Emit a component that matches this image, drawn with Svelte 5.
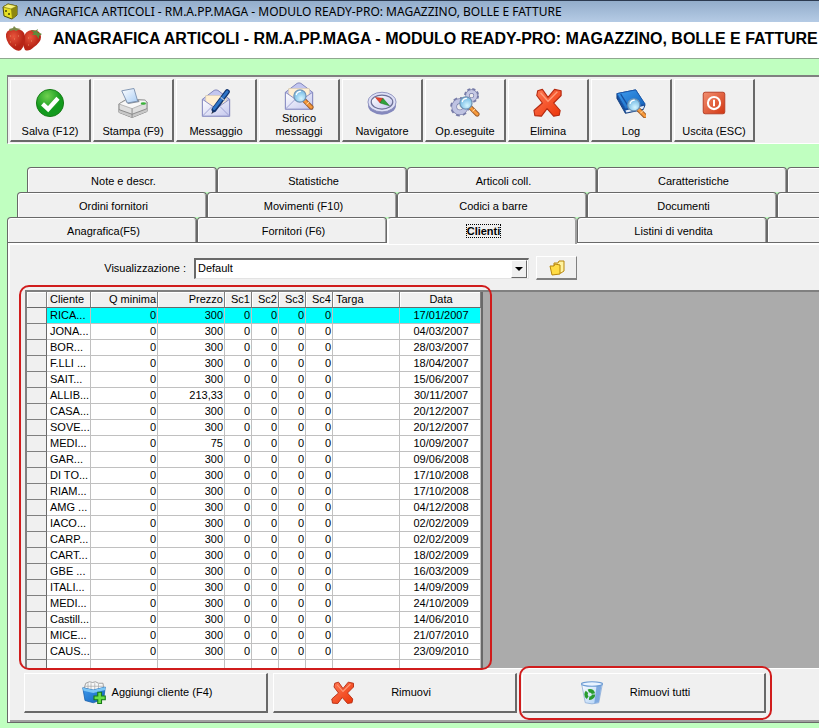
<script>
    const titolo = 'ANAGRAFICA ARTICOLI - RM.A.PP.MAGA - MODULO READY-PRO: MAGAZZINO, BOLLE E FATTURE';

    const comandi = [
        { nome: 'Salva (F12)', icona: salva },
        { nome: 'Stampa (F9)', icona: stampa },
        { nome: 'Messaggio', icona: messaggio },
        { nome: 'Storico messaggi', icona: storico },
        { nome: 'Navigatore', icona: bussola },
        { nome: 'Op.eseguite', icona: ingranaggi },
        { nome: 'Elimina', icona: croce },
        { nome: 'Log', icona: libro },
        { nome: 'Uscita (ESC)', icona: uscita }
    ];

    const schede = [
        ['Note e descr.', 'Statistiche', 'Articoli coll.', 'Caratteristiche'],
        ['Ordini fornitori', 'Movimenti (F10)', 'Codici a barre', 'Documenti'],
        ['Anagrafica(F5)', 'Fornitori (F6)', 'Clienti', 'Listini di vendita']
    ];

    let attiva = $state('Clienti');
    let riga = $state(0);

    const clienti = [
        ['RICA...', '300', '17/01/2007'],
        ['JONA...', '300', '04/03/2007'],
        ['BOR...', '300', '28/03/2007'],
        ['F.LLI ...', '300', '18/04/2007'],
        ['SAIT...', '300', '15/06/2007'],
        ['ALLIB...', '213,33', '30/11/2007'],
        ['CASA...', '300', '20/12/2007'],
        ['SOVE...', '300', '20/12/2007'],
        ['MEDI...', '75', '10/09/2007'],
        ['GAR...', '300', '09/06/2008'],
        ['DI TO...', '300', '17/10/2008'],
        ['RIAM...', '300', '17/10/2008'],
        ['AMG ...', '300', '04/12/2008'],
        ['IACO...', '300', '02/02/2009'],
        ['CARP...', '300', '02/02/2009'],
        ['CART...', '300', '18/02/2009'],
        ['GBE ...', '300', '16/03/2009'],
        ['ITALI...', '300', '14/09/2009'],
        ['MEDI...', '300', '24/10/2009'],
        ['Castill...', '300', '14/06/2010'],
        ['MICE...', '300', '21/07/2010'],
        ['CAUS...', '300', '23/09/2010']
    ];
</script>

{#snippet lente()}
    <path d="M22 21l7 7" stroke="#9a5a28" stroke-width="5" stroke-linecap="round" />
    <path d="M22 21l7 7" stroke="#f79a3c" stroke-width="3" stroke-linecap="round" />
    <path d="M24 25l3-3" stroke="#ffe0b0" stroke-width="1" />
    <circle cx="17" cy="16" r="6.5" fill="url(#vetro)" stroke="#6f93b5" stroke-width="1.3" />
    <path d="M13 15q1-4 5-4" stroke="#fff" stroke-width="1.3" fill="none" />
{/snippet}

{#snippet salva()}
    <circle cx="16" cy="16" r="14.5" fill="url(#verde)" stroke="#147a14" />
    <path d="M8 17l6 5.500L24.500 11" fill="none" stroke="#fff" stroke-width="4.600" />
{/snippet}

{#snippet stampa()}
    <path d="M1 17 9 12 29 13 31 15 31 25 15 31.500 1 26z" fill="#dedede" stroke="#777" />
    <path d="M1 17 9 12.500 29 13 31 15.500 15 22z" fill="#f8f8f8" stroke="#999" stroke-width=".7" />
    <path d="M8 14 22 12.500 23 15 11 17z" fill="#8a9099" />
    <path d="M4 3 17 .5 21 14 10 16z" fill="url(#carta)" stroke="#7d92b0" />
    <path d="M1 26 15 31.500 31 25v-3l-16 6-14-5z" fill="#c8c8c8" />
    <path d="M15 22v9M1 23l14 5 16-6" fill="none" stroke="#888" />
    <ellipse cx="27" cy="16.500" rx="2.800" ry="1.400" fill="#39b339" />
{/snippet}

{#snippet busta()}
    <path d="M1.500 12 14 2.500q2-1 4 0L30.500 12v18h-29z" fill="#c3c6ef" stroke="#7e82b8" />
    <path d="M5 8h22v14H5z" fill="#ffefd2" stroke="#d8c8a8" stroke-width=".6" />
    <path d="M1.500 12v18h29V12L16 22z" fill="url(#lilla)" stroke="#8589c0" />
    <path d="M1.500 30 12 19.500M30.500 30 20 19.500" stroke="#9b9ed0" fill="none" />
{/snippet}

{#snippet messaggio()}
    {@render busta()}
    <path d="M11 28l2-7 3 3z" fill="#303848" />
    <path d="M14 23 28 4" stroke="#12356e" stroke-width="5.500" stroke-linecap="round" />
    <path d="M14 22 28 4" stroke="#2f75c8" stroke-width="3" stroke-linecap="round" />
    <path d="M21 10l5 4" stroke="#b8c4d8" stroke-width="1.200" />
{/snippet}

{#snippet storico()}
    {@render busta()}
    {@render lente()}
{/snippet}

{#snippet bussola()}
    <ellipse cx="16" cy="18" rx="15" ry="10.500" fill="#8488bd" />
    <ellipse cx="16" cy="15" rx="15" ry="10.500" fill="#dfe1f7" stroke="#8d90bd" />
    <ellipse cx="16" cy="15" rx="11.500" ry="7.500" fill="url(#lilla)" stroke="#6d7096" stroke-width="1.300" />
    <path d="M9 10 17 11 14 16z" fill="#e8432c" stroke="#a82412" stroke-width=".5" />
    <path d="M24 19 17 11 14 16z" fill="#2fa33a" stroke="#14601c" stroke-width=".5" />
{/snippet}

{#snippet ingranaggi()}
    <circle cx="23" cy="8" r="5.500" fill="none" stroke="#777ca8" stroke-width="5" stroke-dasharray="2.600 1.720" />
    <circle cx="23" cy="8" r="4.300" fill="#eee" stroke="#777ca8" stroke-width="4.600" />
    <circle cx="23" cy="8" r="4.300" fill="none" stroke="#c6c9e4" stroke-width="3.200" />
    <circle cx="10.500" cy="20" r="7.800" fill="none" stroke="#777ca8" stroke-width="5" stroke-dasharray="3.400 2.725" />
    <circle cx="10.500" cy="20" r="6" fill="#eee" stroke="#777ca8" stroke-width="6" />
    <circle cx="10.500" cy="20" r="6" fill="none" stroke="#bfc3e2" stroke-width="4.600" />
    {@render lente()}
{/snippet}

{#snippet croce()}
    <path d="M5 3 10 1.500 16 10 23 1.500 30 3 30 8 22 16 29 24 28 29 22 30 15 22 9 30 2 29.500 1 24 10 16 4 8z"
        fill="url(#rosso)" stroke="#b52a10" stroke-width="1.200" stroke-linejoin="round" />
    <path d="M8 5l8 9L26 4" fill="none" stroke="#ff9b78" stroke-width="1.500" />
{/snippet}

{#snippet libro()}
    <path d="M1 6 21 2 31 18 29 23 10 27 1 11z" fill="#164f9e" stroke="#123c7c" />
    <path d="M10 24 30 19 29 22 11 26z" fill="#e7eef8" />
    <path d="M1 6 21 2 31 17 10 22z" fill="url(#blu)" stroke="#1b5bb0" />
    <path d="M5 6.500 14 21" stroke="#174f9e" stroke-width="1.300" />
    <g transform="translate(2 2)">{@render lente()}</g>
{/snippet}

{#snippet uscita()}
    <rect x="4.500" y="4.500" width="23" height="23" rx="2" fill="url(#mattone)" stroke="#b53c22" />
    <circle cx="16" cy="16" r="6.500" fill="none" stroke="#fff" stroke-width="2.200" />
    <path d="M16 12.500v7" stroke="#fff" stroke-width="2.200" />
{/snippet}

{#snippet aggiungi()}
    <path d="M3 9 5 3 10 1 14 2 18 1 22 3 28 3 29 10 16 14z" fill="#f7f7f7" stroke="#888" />
    <path d="M8 3v7M12 3v8M17 3v8M22 4v6M4 7l24 0" stroke="#aaa" />
    <path d="M1 9 15 12 31 8 29 24 15 29 4 26z" fill="url(#blu)" stroke="#145ba8" />
    <path d="M1 9 15 12 31 8v4l-16 4L2 13z" fill="#7cc6f5" />
    <path d="M21 15h5v5h5v5h-5v5h-5v-5h-5v-5h5z" fill="#6be046" stroke="#187a18" stroke-width="1.500" />
{/snippet}

{#snippet cestino()}
    <path d="M2 3 30 3 25 29q-9 3-18 0z" fill="url(#carta)" stroke="#8cabd4" />
    <path d="M22 7 29 4 25 28 19 30z" fill="#7fa9df" />
    <ellipse cx="16" cy="4" rx="14" ry="3" fill="#e9f3ff" stroke="#6c9bd3" stroke-width="1.500" />
    <circle cx="13" cy="18" r="5" fill="none" stroke="#2a9c2f" stroke-width="4.500" stroke-dasharray="8.500 2" />
{/snippet}

{#snippet icona(disegno, classe)}
    <svg class={classe} viewBox="0 0 32 32" fill="none" aria-hidden="true">{@render disegno()}</svg>
{/snippet}

<svg class="sfumature" aria-hidden="true">
    <defs>
        <radialGradient id="verde" cx=".4" cy=".25"><stop stop-color="#6fd04f" /><stop offset="1" stop-color="#139a1e" /></radialGradient>
        <radialGradient id="vetro" cx=".6" cy=".7"><stop stop-color="#d4f5ff" /><stop offset="1" stop-color="#87c6ea" /></radialGradient>
        <linearGradient id="carta" x2="1" y2="1"><stop stop-color="#fff" /><stop offset="1" stop-color="#a9cdf5" /></linearGradient>
        <linearGradient id="lilla" x2="1" y2="1"><stop stop-color="#fff" /><stop offset="1" stop-color="#c4c7ee" /></linearGradient>
        <linearGradient id="rosso" x2="1" y2="1"><stop stop-color="#ff7a55" /><stop offset="1" stop-color="#ec3408" /></linearGradient>
        <linearGradient id="mattone" x2="1" y2="1"><stop stop-color="#f28f70" /><stop offset="1" stop-color="#d23612" /></linearGradient>
        <linearGradient id="blu" x2="1" y2="1"><stop stop-color="#3f9df0" /><stop offset="1" stop-color="#1260b8" /></linearGradient>
        <radialGradient id="fragola" cx=".4" cy=".35"><stop stop-color="#e8553c" /><stop offset="1" stop-color="#b82416" /></radialGradient>
    </defs>
</svg>

<main>
    <div class="barra-titolo">
        <svg class="cubo" viewBox="0 0 16 18" aria-hidden="true">
            <path d="M1 4 6 1 15 3 15 12 10 16 2 13z" fill="#e6df22" stroke="#4c4a08" />
            <path d="M9 6 15 3v9l-5 4z" fill="#8d8710" />
            <path d="M1 4 9 6 15 3 6 1z" fill="#f7f27a" stroke="#6b680c" stroke-width=".6" />
            <path d="M3 7h2v2H3zM6 10h2v2H6z" fill="#6b680c" />
        </svg>
        <span>{titolo}</span>
    </div>

    <header>
        <svg class="fragole" viewBox="0 0 38 26" aria-hidden="true">
            <path d="M19 11q1-6 8-7 9 0 9 7 0 5-7 10-5 5-9 3-3-5-1-13z" fill="url(#fragola)" />
            <path d="M1 11Q0 4 8 3q11-1 12 7 1 8-4 14-3 2-7-1-7-5-8-12z" fill="url(#fragola)" />
            <path d="M4 3 8 2 9 0l2 2 5 1-3 1-2 1-2-1-4 1z" fill="#7c8a4a" />
            <path d="M26 4l4 1 3-2-1 3 5 2-3 2 0 3-3-4-4 0 2-2z" fill="#5f8a3a" />
            <path d="M5 10h1M9 13h1M5 16h1M13 10h1M10 19h1M23 12h1M26 15h1M23 19h1" stroke="#f0a070" stroke-width=".8" />
        </svg>
        <h1>{titolo}</h1>
    </header>

    <div class="comandi" role="toolbar" aria-label="Comandi">
        {#each comandi as c}
            <button class="comando">
                <span class="figura">{@render icona(c.icona, 'grande')}</span>
                <span class="nome">{c.nome}</span>
            </button>
        {/each}
    </div>

    <div class="schede" role="tablist">
        {#each schede as fila}
            <div class="fila">
                {#each fila as s}
                    <button class="scheda" class:attiva={attiva == s} role="tab" aria-selected={attiva == s} onclick={() => (attiva = s)}>
                        <span>{s}</span>
                    </button>
                {/each}
                <span class="scheda"></span>
            </div>
        {/each}
    </div>

    <section class="pannello">
        <div class="filtro">
            <label for="vista">Visualizzazione :</label>
            <div class="combo">
                <select id="vista">
                    <option>Default</option>
                </select>
                <span class="freccia"></span>
            </div>
            <button class="cartella" aria-label="Apri">
                <svg viewBox="0 0 16 16" aria-hidden="true">
                    <path d="M5 3 9 3 10 1 15 1 15 11 12 13 5 13z" fill="#fff3a0" stroke="#b8860b" />
                    <path d="M1 6 5 6 6 4 11 5 11 14 3 15z" fill="#ffdc45" stroke="#b8860b" />
                </svg>
            </button>
        </div>

        <div class="griglia">
            <div class="riquadro elenco">
                <table>
                    <colgroup>
                        <col class="c-sel" /><col class="c-cli" /><col class="c-num" /><col class="c-num" />
                        <col class="c-sc" /><col class="c-sc" /><col class="c-sc" /><col class="c-sc" />
                        <col class="c-num" /><col class="c-data" />
                    </colgroup>
                    <thead>
                        <tr>
                            <td></td>
                            <th class="sx">Cliente</th>
                            <th>Q minima</th>
                            <th>Prezzo</th>
                            <th>Sc1</th>
                            <th>Sc2</th>
                            <th>Sc3</th>
                            <th>Sc4</th>
                            <th class="sx">Targa</th>
                            <th class="centro">Data</th>
                        </tr>
                    </thead>
                    <tbody>
                        {#each clienti as [nome, prezzo, data], i}
                            <tr class:scelta={riga == i} onclick={() => (riga = i)}>
                                <td class="sel"></td>
                                <td class="sx">{nome}</td>
                                <td>0</td>
                                <td>{prezzo}</td>
                                <td>0</td>
                                <td>0</td>
                                <td>0</td>
                                <td>0</td>
                                <td></td>
                                <td class="centro">{data}</td>
                            </tr>
                        {/each}
                        <tr class="vuota">
                            <td class="sel"></td>
                            {#each Array(9) as _}<td></td>{/each}
                        </tr>
                    </tbody>
                </table>
            </div>
        </div>

        <div class="azioni">
            <button class="azione">{@render icona(aggiungi, 'media')}<span>Aggiungi cliente (F4)</span></button>
            <button class="azione">{@render icona(croce, 'media')}<span>Rimuovi</span></button>
            <div class="riquadro tutti">
                <button class="azione">{@render icona(cestino, 'media')}<span>Rimuovi tutti</span></button>
            </div>
        </div>
    </section>
</main>

<style>
    :global(body) {
        background: #c0ffc0;
        overflow-x: hidden;
    }

    main {
        font: 11px/13px "Liberation Sans", Arial, sans-serif;
        color: #000;
        overflow: hidden;
        padding-bottom: 4px;
    }

    button, select {
        font: inherit;
        color: inherit;
        padding: 0;
    }

    .sfumature {
        position: absolute;
        width: 0;
        height: 0;
    }

    .barra-titolo {
        display: flex;
        align-items: center;
        gap: 7px;
        height: 21px;
        padding-left: 2px;
        border-top: 1px solid #2c3a50;
        background: linear-gradient(#93adcb, #b5cbe5);
        font-family: "Noto Sans", sans-serif;
        font-size: 12px;
        white-space: nowrap;
    }

    .cubo {
        width: 16px;
        height: 18px;
    }

    header {
        display: flex;
        align-items: center;
        gap: 10px;
        height: 36px;
        padding-left: 5px;
        background: #fff;
        border-bottom: 1px solid #8fa88f;
    }

    .fragole {
        width: 38px;
        height: 26px;
        flex: none;
        margin-bottom: 2px;
    }

    h1 {
        margin: 0 0 3px;
        font-size: 16px;
        line-height: 20px;
        white-space: nowrap;
    }

    .comandi {
        display: flex;
        gap: 2px;
        margin: 16px 0 0 7px;
        padding: 2px 2px 1px;
        background: #f0f0f0;
        border: 1px solid #808080;
        border-top-width: 2px;
        border-right: 0;
        border-bottom-color: #fff;
    }

    .comando {
        display: flex;
        flex-direction: column;
        align-items: center;
        box-sizing: border-box;
        flex: none;
        width: 81px;
        height: 63px;
        padding-bottom: 2px;
        background: #f0f0f0;
        border: 1px solid #fff;
        border-right: 2px solid #696969;
        border-bottom: 2px solid #696969;
    }

    .figura {
        flex: 1;
        display: flex;
        align-items: center;
    }

    .nome {
        max-width: 64px;
        text-align: center;
    }

    .grande {
        width: 30px;
        height: 30px;
        display: block;
    }

    .schede {
        margin-top: 23px;
    }

    .fila {
        display: flex;
        padding-left: 27px;
    }

    .fila:nth-child(2) {
        padding-left: 17px;
    }

    .fila:nth-child(3) {
        padding-left: 7px;
    }

    .scheda {
        box-sizing: border-box;
        flex: none;
        width: 190px;
        height: 25px;
        padding: 2px 0 0 3px;
        background: #f0f0f0;
        border: 1px solid #696969;
        border-bottom: 0;
        border-radius: 4px 4px 0 0;
        box-shadow: inset 1px 1px #fff, inset -1px 0 #a0a0a0;
    }

    .attiva {
        position: relative;
        height: 27px;
        margin-bottom: -2px;
        padding-bottom: 2px;
        border-color: #696969 #a0a0a0 #696969 #fff;
        font-weight: bold;
    }

    .attiva span {
        outline: 1px dotted #000;
    }

    .pannello {
        margin-left: 7px;
        padding: 13px 0 5px 16px;
        background: #f0f0f0;
        border: 1px solid #696969;
        border-right: 0;
        box-shadow: inset 2px 2px #fff, inset 0 -2px #a0a0a0;
    }

    .filtro {
        display: flex;
        align-items: center;
        padding-bottom: 10px;
    }

    .filtro label {
        width: 162px;
        text-align: right;
        margin-right: 8px;
    }

    .combo {
        display: flex;
        position: relative;
        width: 335px;
        margin-right: 7px;
    }

    select {
        appearance: none;
        box-sizing: border-box;
        width: 100%;
        height: 21px;
        padding-left: 2px;
        background: #fff;
        border: 2px solid #696969;
        border-right: 1px solid #e3e3e3;
        border-bottom: 1px solid #e3e3e3;
        border-radius: 0;
    }

    .freccia {
        position: absolute;
        top: 2px;
        right: 2px;
        bottom: 1px;
        width: 14px;
        display: grid;
        place-items: center;
        background: #f0f0f0;
        border: 1px solid #fff;
        border-right-color: #696969;
        border-bottom-color: #696969;
        pointer-events: none;
    }

    .freccia::before {
        content: "";
        border: 4px solid transparent;
        border-top-color: #000;
        border-bottom: 0;
    }

    .cartella {
        display: grid;
        place-items: center;
        width: 41px;
        height: 24px;
        background: #f0f0f0;
        border: 1px solid #fff;
        border-right-color: #808080;
        border-bottom: 2px solid #808080;
    }

    .cartella svg {
        width: 16px;
        height: 16px;
        fill: none;
    }

    .griglia {
        margin-left: 1px;
        background: #ababab;
        border-top: 2px solid #808080;
        border-left: 2px solid #808080;
    }

    .riquadro {
        position: relative;
        width: max-content;
    }

    .riquadro::after {
        content: "";
        position: absolute;
        border: 2px solid #d01c1c;
        border-radius: 10px;
        pointer-events: none;
    }

    .elenco::after {
        inset: -7px -9px -2px -8px;
    }

    .tutti::after {
        inset: -7px -6px -7px -3px;
    }

    table {
        table-layout: fixed;
        width: 456px;
        border-collapse: separate;
        border-spacing: 0;
        border-right: 2px solid #696969;
        background: #fff;
    }

    .c-sel { width: 20px; }
    .c-cli { width: 44px; }
    .c-num { width: 67px; }
    .c-sc { width: 27px; }
    .c-data { width: 81px; }

    td, th {
        box-sizing: border-box;
        height: 16px;
        padding: 0 1px 0 0;
        font-weight: normal;
        line-height: 15px;
        text-align: right;
        white-space: nowrap;
        overflow: hidden;
        border-right: 1px solid #c0c0c0;
        border-bottom: 1px solid #c0c0c0;
    }

    thead td, thead th {
        height: 16px;
        background: #f0f0f0;
        border-right-color: #808080;
        border-bottom-color: #696969;
        box-shadow: inset 1px 1px #fff;
    }

    .sx {
        text-align: left;
        padding-left: 3px;
    }

    .centro {
        text-align: center;
        padding-left: 3px;
    }

    .sel {
        background: #f0f0f0;
        border-right-color: #696969;
        border-bottom-color: #808080;
    }

    .scelta td:not(.sel) {
        background: #0ff;
    }

    .vuota td {
        height: 8px;
        border-bottom: 0;
    }

    .azioni {
        display: flex;
        gap: 5px;
        padding: 4px 0;
        border-top: 1px solid #fff;
    }

    .azione {
        display: flex;
        align-items: center;
        box-sizing: border-box;
        width: 244px;
        height: 40px;
        padding-left: 57px;
        background: #f0f0f0;
        border: 1px solid #fff;
        border-right: 2px solid #696969;
        border-bottom: 2px solid #696969;
    }

    .azione span {
        width: 112px;
        text-align: center;
        white-space: nowrap;
    }

    .media {
        width: 24px;
        height: 24px;
        flex: none;
    }
</style>
